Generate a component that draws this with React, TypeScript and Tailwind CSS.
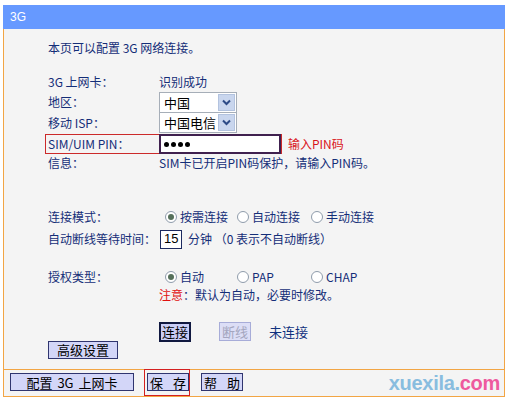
import React from 'react';

const label = 'w-[111px] shrink-0';

const Radio = ({ checked }: { checked?: boolean }) => (
  <span className="w-[12px] h-[12px] rounded-full border border-[#8f9cab] bg-white flex items-center justify-center shrink-0">
    {checked && <span className="w-[6px] h-[6px] rounded-full bg-[#55705a]" />}
  </span>
);

const Select = ({ value, w }: { value: string; w: string }) => (
  <div className={`${w} h-[21px] bg-white border border-[#a6aeb8] flex items-center`}>
    <span className="flex-1 pl-[4px] text-[13px] text-black leading-none">{value}</span>
    <span className="w-[17px] h-[17px] mr-[1px] bg-[#c9d6ee] border border-[#b3c3df] flex items-center justify-center">
      <svg width="9" height="7" viewBox="0 0 9 7">
        <polyline points="1,1.5 4.5,5 8,1.5" fill="none" stroke="#2c4a86" strokeWidth="2" />
      </svg>
    </span>
  </div>
);

const Btn = ({ children, w, className = '' }: { children: React.ReactNode; w: string; className?: string }) => (
  <button className={`${w} h-[18px] bg-[#d3d6f8] border border-[#30356f] text-[13px] leading-none text-black flex items-center justify-center ${className}`}>
    {children}
  </button>
);

export default function App() {
  return (
    <div className="w-[508px] h-[399px] bg-white pt-[5px] pl-[3px] font-['Noto_Sans_CJK_SC',sans-serif] text-[12px] text-[#142e78]">
      <div className="w-[502px]">
        <div className="h-[24px] bg-[#6699ff] text-white text-[12px] font-normal flex items-center pl-[7px] font-['Liberation_Sans',sans-serif]">3G</div>
        <div className="h-[341px] bg-[#f4f4f4] border-x border-b border-[#f2a544] pl-[44px] pt-[9px]">
          <div className="h-[20px] flex items-center">本页可以配置 3G 网络连接。</div>
          <div className="h-[20px] mt-[14px] flex items-center">
            <span className={label}>3G 上网卡：</span>
            <span>识别成功</span>
          </div>
          <div className="h-[20px] flex items-center">
            <span className={label}>地区：</span>
            <Select value="中国" w="w-[78px]" />
          </div>
          <div className="h-[21px] flex items-center">
            <span className={label}>移动 ISP：</span>
            <Select value="中国电信" w="w-[78px]" />
          </div>
          <div className="h-[20px] mt-[1px] flex items-center">
            <div className="w-[237px] h-[20px] -ml-[3px] pl-[2px] border border-[#cc2a2a] flex items-center">
              <span className="w-[111px] shrink-0">SIM/UIM PIN：</span>
              <div className="w-[122px] h-[20px] bg-white border-2 border-[#40214f] flex items-center pl-[3px] gap-[2px]">
                <span className="w-[5px] h-[5px] rounded-full bg-black" />
                <span className="w-[5px] h-[5px] rounded-full bg-black" />
                <span className="w-[5px] h-[5px] rounded-full bg-black" />
                <span className="w-[5px] h-[5px] rounded-full bg-black" />
              </div>
            </div>
            <span className="ml-[6px] text-[#d9141b]">输入PIN码</span>
          </div>
          <div className="h-[17px] flex items-center">
            <span className={label}>信息：</span>
            <span>SIM卡已开启PIN码保护，请输入PIN码。</span>
          </div>
          <div className="h-[20px] mt-[36px] flex items-center">
            <span className={label}>连接模式：</span>
            <div className="flex items-center pl-[6px]">
              <div className="w-[72px] flex items-center gap-[3px]"><Radio checked /><span>按需连接</span></div>
              <div className="w-[74px] flex items-center gap-[3px]"><Radio /><span>自动连接</span></div>
              <div className="flex items-center gap-[3px]"><Radio /><span>手动连接</span></div>
            </div>
          </div>
          <div className="h-[20px] mt-[2px] flex items-center">
            <span className={label}>自动断线等待时间：</span>
            <div className="w-[22px] h-[19px] ml-[1px] bg-white border border-[#1d2a60] flex items-center pl-[3px] text-[13px] text-black font-['Liberation_Sans',sans-serif]">15</div>
            <span className="ml-[6px]">分钟 （0 表示不自动断线）</span>
          </div>
          <div className="h-[20px] mt-[18px] flex items-center">
            <span className={label}>授权类型：</span>
            <div className="flex items-center pl-[6px]">
              <div className="w-[72px] flex items-center gap-[3px]"><Radio checked /><span>自动</span></div>
              <div className="w-[74px] flex items-center gap-[3px]"><Radio /><span>PAP</span></div>
              <div className="flex items-center gap-[3px]"><Radio /><span>CHAP</span></div>
            </div>
          </div>
          <div className="h-[16px] flex items-center">
            <span className={label}></span>
            <span><span className="text-[#e01010]">注意</span>：默认为自动，必要时修改。</span>
          </div>
          <div className="h-[19px] mt-[19px] flex items-center">
            <span className={label}></span>
            <button className="w-[32px] h-[20px] bg-[#c9cdf6] border-2 border-[#101840] text-[13px] leading-none text-black flex items-center justify-center">连接</button>
            <button className="w-[32px] h-[19px] ml-[28px] bg-[#dcdef6] border border-[#a7acd8] text-[13px] leading-none text-[#a4a6bf] flex items-center justify-center">断线</button>
            <span className="ml-[18px] text-[13px] text-[#10317e]">未连接</span>
          </div>
          <div className="h-[17px] flex items-center">
            <Btn w="w-[70px]">高级设置</Btn>
          </div>
        </div>
        <div className="h-[27px] bg-[#f4f4f4] border-x border-b border-[#f2a544] flex items-start pt-[3px] pl-[6px]">
          <Btn w="w-[124px]" className="gap-[5px]"><span>配置</span><span>3G</span><span>上网卡</span></Btn>
          <div className="relative ml-[13px]">
            <span className="absolute -left-[3px] -top-[4px] w-[46px] h-[27px] border border-[#d42020]" />
            <Btn w="w-[42px]" className="gap-[10px]"><span>保</span><span>存</span></Btn>
          </div>
          <Btn w="w-[42px]" className="ml-[12px] gap-[10px]"><span>帮</span><span>助</span></Btn>
          <div className="ml-auto mr-[4px] -mt-[1px] text-[20px] font-bold leading-[22px] font-['Liberation_Sans',sans-serif] tracking-[-0.3px]">
            <span className="text-[#89bddf]">xuexila.</span>
            <span className="text-[#ee5a9e]">com</span>
          </div>
        </div>
      </div>
    </div>
  );
}
